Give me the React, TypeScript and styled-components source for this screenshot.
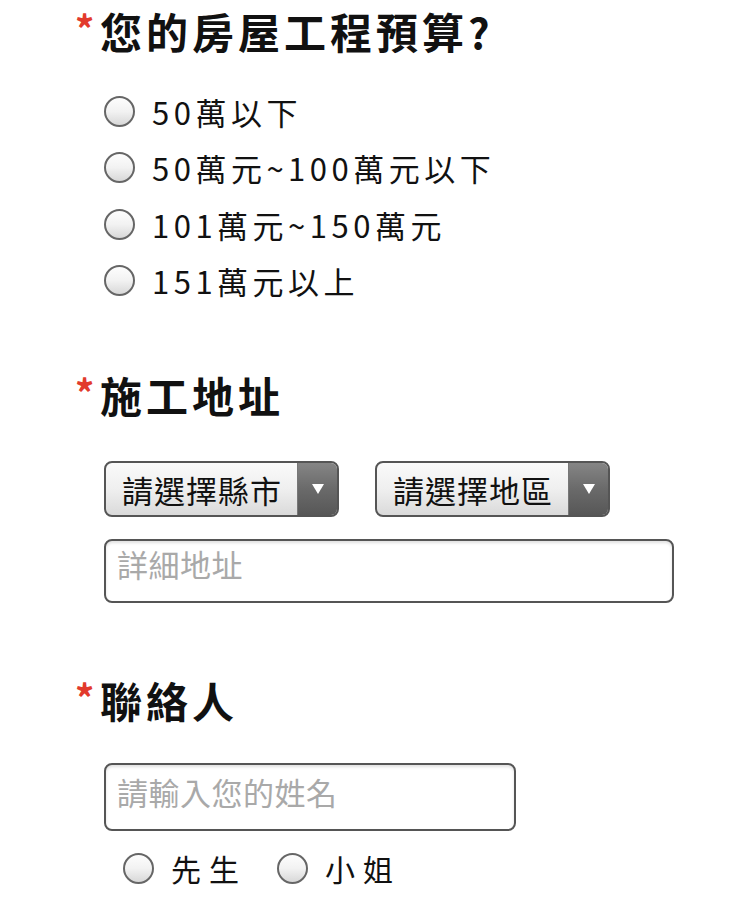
import React, { useState } from 'react';
import styled, { createGlobalStyle } from 'styled-components';

const GlobalStyle = createGlobalStyle`
  html, body {
    margin: 0;
    padding: 0;
    background: #fff;
  }
  body {
    font-family: "Noto Sans CJK TC", "Noto Sans", sans-serif;
    color: #111;
  }
`;

const budgetOptions = ['50萬以下', '50萬元~100萬元以下', '101萬元~150萬元', '151萬元以上'];

const Field: React.FC<{ title: string; children: React.ReactNode; gap: number }> = ({
  title,
  children,
  gap,
}) => (
  <Section>
    <Heading>
      <Star>*</Star>
      {title}
    </Heading>
    <Body gap={gap}>{children}</Body>
  </Section>
);

const App: React.FC = () => {
  const [budget, setBudget] = useState('');
  const [gender, setGender] = useState('');

  return (
    <>
      <GlobalStyle />
      <Page>
        <Field title="您的房屋工程預算?" gap={27}>
          <RadioList>
            {budgetOptions.map((opt) => (
              <RadioRow key={opt}>
                <Radio
                  type="radio"
                  name="budget"
                  checked={budget === opt}
                  onChange={() => setBudget(opt)}
                />
                <RadioText>{opt}</RadioText>
              </RadioRow>
            ))}
          </RadioList>
        </Field>

        <Spacer h={61} />

        <Field title="施工地址" gap={41}>
          <SelectRow>
            <Select>
              <SelectLabel>請選擇縣市</SelectLabel>
              <SelectArrow />
            </Select>
            <Select>
              <SelectLabel>請選擇地區</SelectLabel>
              <SelectArrow />
            </Select>
          </SelectRow>
          <TextInput width={570} height={64} padBottom={16} placeholder="詳細地址" />
        </Field>

        <Spacer h={72} />

        <Field title="聯絡人" gap={38}>
          <TextInput width={412} height={68} padBottom={12} placeholder="請輸入您的姓名" />
          <GenderRow>
            {['先生', '小姐'].map((g) => (
              <GenderItem key={g}>
                <Radio
                  type="radio"
                  name="gender"
                  checked={gender === g}
                  onChange={() => setGender(g)}
                />
                <GenderText>{g}</GenderText>
              </GenderItem>
            ))}
          </GenderRow>
        </Field>
      </Page>
    </>
  );
};

export default App;

// styled-components
const Page = styled.div`
  width: 750px;
  height: 920px;
  padding: 6px 0 0 75px;
  box-sizing: border-box;
  overflow: hidden;
`;

const Section = styled.section`
  display: flex;
  flex-direction: column;
`;

const Spacer = styled.div<{ h: number }>`
  height: ${(p) => p.h}px;
`;

const Heading = styled.h2`
  margin: 0;
  height: 50px;
  display: flex;
  align-items: center;
  font-size: 42px;
  line-height: 50px;
  font-weight: 700;
  letter-spacing: 4px;
  color: #111;
`;

const Star = styled.span`
  color: #e23a2c;
  font-size: 38px;
  width: 25px;
  letter-spacing: 0;
  margin-top: -6px;
`;

const Body = styled.div<{ gap: number }>`
  display: flex;
  flex-direction: column;
  padding-top: ${(p) => p.gap}px;
  padding-left: 29px;
`;

const RadioList = styled.div`
  display: flex;
  flex-direction: column;
`;

const RadioRow = styled.label`
  height: 56.5px;
  display: flex;
  align-items: center;
  gap: 17px;
  cursor: pointer;
`;

const Radio = styled.input`
  appearance: none;
  -webkit-appearance: none;
  margin: 0;
  width: 31px;
  height: 31px;
  border-radius: 50%;
  border: 2px solid #666;
  box-sizing: border-box;
  background: linear-gradient(to bottom, #fdfdfd 0%, #f2f2f2 50%, #d8d8d8 100%);
  flex-shrink: 0;
  cursor: pointer;

  &:checked {
    background: radial-gradient(circle, #333 0 6px, #f2f2f2 7px);
  }
`;

const RadioText = styled.span`
  font-size: 31px;
  letter-spacing: 4.5px;
  color: #111;
`;

const SelectRow = styled.div`
  display: flex;
  gap: 36px;
  margin-bottom: 22px;
`;

const Select = styled.div`
  width: 235px;
  height: 56px;
  box-sizing: border-box;
  border: 2px solid #555;
  border-radius: 8px;
  display: flex;
  overflow: hidden;
  background: linear-gradient(to bottom, #fafafa 0%, #efefef 50%, #dadada 100%);
  cursor: pointer;
`;

const SelectLabel = styled.span`
  flex: 1;
  display: flex;
  align-items: center;
  padding-left: 16px;
  font-size: 31px;
  letter-spacing: 1px;
  color: #111;
`;

const SelectArrow = styled.span`
  width: 39px;
  display: flex;
  align-items: center;
  justify-content: center;
  background: linear-gradient(to bottom, #858585 0%, #6a6a6a 50%, #575757 100%);
  border-left: 1px solid #777;

  &::after {
    content: '';
    width: 0;
    height: 0;
    border-left: 6px solid transparent;
    border-right: 6px solid transparent;
    border-top: 10px solid #fff;
  }
`;

const TextInput = styled.input<{ width: number; height: number; padBottom: number }>`
  width: ${(p) => p.width}px;
  height: ${(p) => p.height}px;
  box-sizing: border-box;
  border: 2px solid #555;
  border-radius: 8px;
  padding: 0 12px ${(p) => p.padBottom}px 11px;
  font-family: "Noto Sans CJK TC", "Noto Sans", sans-serif;
  font-size: 31px;
  letter-spacing: 0.5px;
  color: #111;
  background: #fff;
  box-shadow: inset 0 2px 3px rgba(0, 0, 0, 0.12);
  outline: none;

  &::placeholder {
    color: #a9a9a9;
  }
`;

const GenderRow = styled.div`
  display: flex;
  align-items: center;
  height: 48px;
  margin-top: 13px;
  padding-left: 19px;
  gap: 30px;
`;

const GenderItem = styled.label`
  display: flex;
  align-items: center;
  gap: 17px;
  cursor: pointer;
`;

const GenderText = styled.span`
  font-size: 30px;
  letter-spacing: 8px;
  color: #111;
`;
